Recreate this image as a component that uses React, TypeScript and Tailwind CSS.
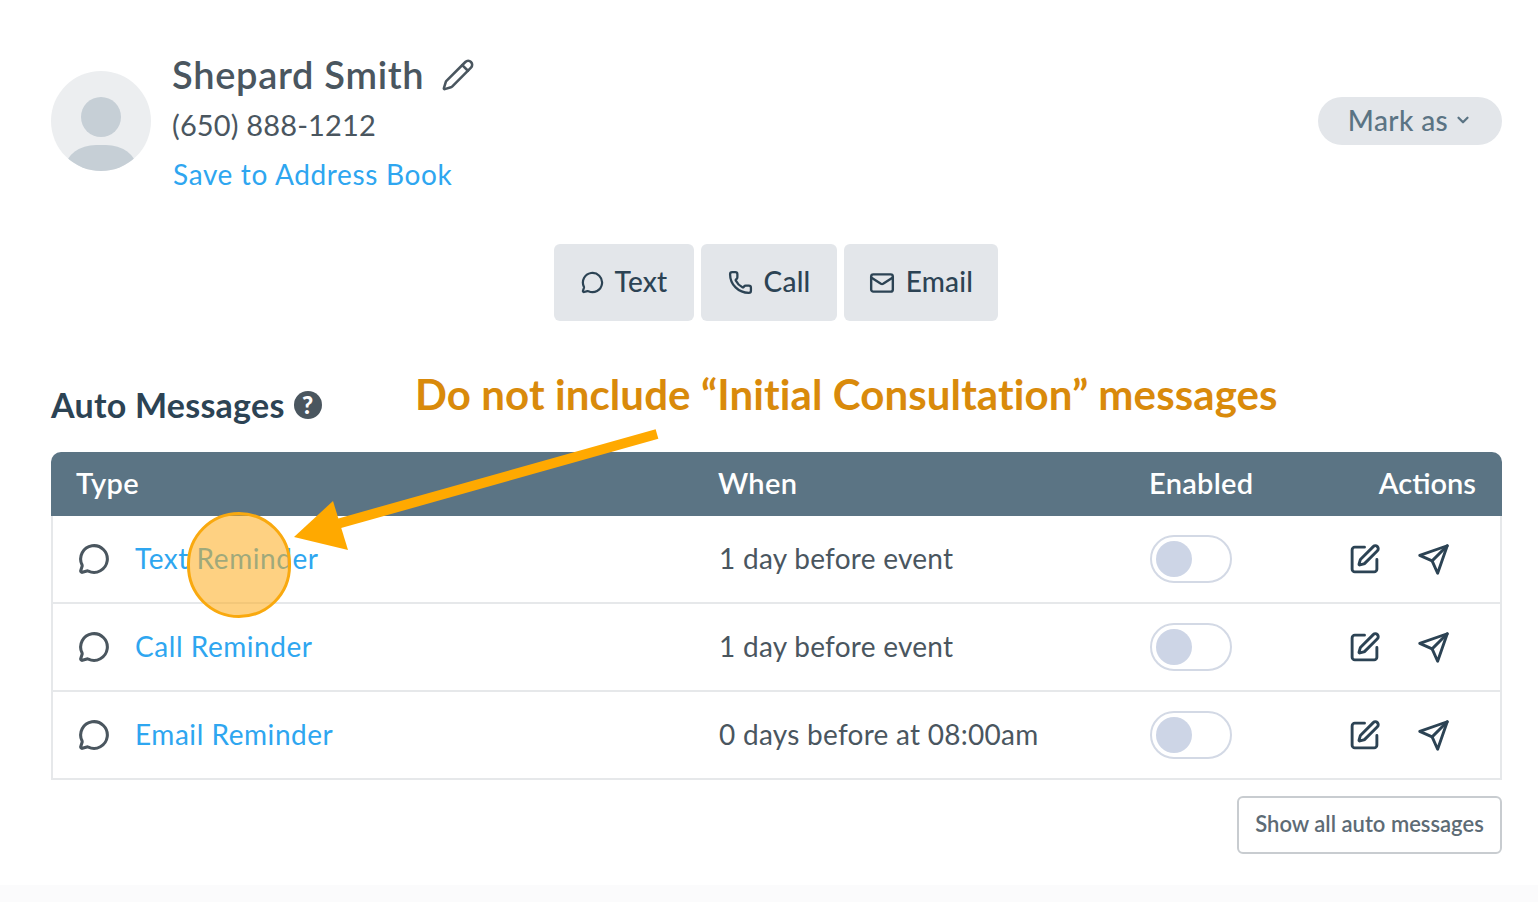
import React from 'react';
import { ChevronDown, Mail, MessageCircle, Pencil, Phone, SquarePen } from 'lucide-react';
import { FiSend } from 'react-icons/fi';

const rows = [
  { name: 'Text Reminder', when: '1 day before event' },
  { name: 'Call Reminder', when: '1 day before event' },
  { name: 'Email Reminder', when: '0 days before at 08:00am' },
];

const contactButtons = [
  { label: 'Text', icon: <MessageCircle size={23} strokeWidth={2.3} />, width: 'w-[140px]' },
  { label: 'Call', icon: <Phone size={25} strokeWidth={2.2} />, width: 'w-[136px]' },
  { label: 'Email', icon: <Mail size={26} strokeWidth={2.2} />, width: 'w-[154px]' },
];

const App = () => {
  return (
    <div className="relative h-[902px] w-[1538px] overflow-hidden bg-white font-['Lato',sans-serif] text-[#4a565f]">
      <div className="h-[885px] pl-[51px] pr-[36px] pt-[52px]">
        {/* Contact header */}
        <div className="flex items-center justify-between">
          <div className="flex items-center gap-[21px]">
            <div className="relative mb-[6px] h-[100px] w-[100px] overflow-hidden rounded-full bg-[#eceef0]">
              <div className="absolute left-[30px] top-[26px] h-[40px] w-[40px] rounded-full bg-[#c6cfd6]" />
              <div className="absolute left-[15px] top-[74px] h-[50px] w-[70px] rounded-[30px/22px] bg-[#c6cfd6]" />
            </div>
            <div className="flex flex-col">
              <div className="flex h-[44px] items-center gap-[17px]">
                <span className="text-[38px] font-semibold leading-none tracking-[0.7px]">Shepard Smith</span>
                <Pencil size={34} strokeWidth={1.8} className="mt-[2px]" />
              </div>
              <div className="flex h-[56px] items-center text-[29px] leading-none tracking-[0.15px]">(650) 888-1212</div>
              <a className="flex h-[44px] items-center pl-[1px] text-[28px] leading-none tracking-[0.65px] text-[#2ea6f0]">Save to Address Book</a>
            </div>
          </div>
          <button className="mb-[6px] flex h-[48px] w-[184px] items-center justify-center gap-[6px] rounded-full bg-[#e3e6ea] pb-[2px] text-[28px] font-medium tracking-[0.4px] text-[#5b7484]">
            Mark as
            <ChevronDown size={18} strokeWidth={3} />
          </button>
        </div>

        {/* Contact actions */}
        <div className="mt-[48px] flex justify-center gap-[7px] pr-[1px]">
          {contactButtons.map((b) => (
            <button
              key={b.label}
              className={`flex h-[77px] items-center justify-center gap-[11px] rounded-[6px] bg-[#e3e6ea] text-[28px] font-medium tracking-[0.2px] text-[#2c4354] ${b.width}`}
            >
              {b.icon}
              <span className="pb-[3px]">{b.label}</span>
            </button>
          ))}
        </div>

        {/* Auto messages */}
        <div className="mt-[62px] flex h-[44px] items-center gap-[9px]">
          <h2 className="text-[34px] font-bold leading-none tracking-[0.25px] text-[#2c4354]">Auto Messages</h2>
          <span className="flex h-[28px] w-[28px] items-center justify-center rounded-full bg-[#4a565f] text-[24px] font-black leading-none text-white">?</span>
        </div>

        <div className="mt-[25px] overflow-hidden rounded-t-[10px]">
          <div className="grid h-[64px] grid-cols-[642px_431px_1fr] items-center bg-[#5b7484] pb-[2px] pl-[25px] pr-[26px] text-[29px] font-semibold tracking-[0.3px] text-white">
            <span>Type</span>
            <span>When</span>
            <div className="flex justify-between">
              <span>Enabled</span>
              <span className="tracking-normal">Actions</span>
            </div>
          </div>
          <div className="border-x-2 border-b-2 border-[#e6e8ea]">
            {rows.map((row, i) => (
              <div
                key={row.name}
                className={`grid grid-cols-[641px_431px_1fr] items-center pl-[25px] pr-[50px] ${i < 2 ? 'h-[88px] border-b-2 border-[#e6e8ea]' : 'h-[86px]'}`}
              >
                <div className="flex items-center gap-[25px]">
                  <MessageCircle size={32} strokeWidth={2.3} />
                  <a className="pb-[2px] text-[28px] tracking-[0.55px] text-[#2ea6f0]">{row.name}</a>
                </div>
                <span className="pb-[2px] text-[28px] tracking-[0.27px]">{row.when}</span>
                <div className="flex items-center justify-between">
                  <div className="flex h-[48px] w-[82px] items-center rounded-full border-2 border-[#d3d9e5] bg-white pl-[4px]">
                    <div className="h-[36px] w-[36px] rounded-full bg-[#cdd5e6]" />
                  </div>
                  <div className="flex items-center gap-[36px] text-[#2c4354]">
                    <SquarePen size={33} strokeWidth={2.1} />
                    <FiSend size={33} strokeWidth={2.1} />
                  </div>
                </div>
              </div>
            ))}
          </div>
        </div>

        <div className="mt-[16px] flex justify-end">
          <button className="h-[58px] w-[265px] rounded-[6px] border-2 border-[#c8ccd0] bg-white pb-[3px] text-[22px] font-semibold text-[#5d6b75]">
            Show all auto messages
          </button>
        </div>
      </div>
      <div className="h-[17px] bg-[#fbfbfc]" />

      {/* Annotation overlay */}
      <p className="absolute left-[415px] top-[369px] whitespace-nowrap text-[42px] font-bold leading-[50px] tracking-[0.1px] text-[#d98a0b]">
        Do not include “Initial Consultation” messages
      </p>
      <svg className="absolute left-0 top-0" width="1538" height="902" fill="none">
        <path d="M657 434 L330 526" stroke="#ffa900" strokeWidth="10" />
        <path d="M294 537 L333 501 L348 550 Z" fill="#ffa900" />
      </svg>
      <div className="absolute left-[187px] top-[512px] h-[106px] w-[104px] rounded-full border-[3px] border-[#f9a90f] bg-[#fdac1c]/55" />
    </div>
  );
};

export default App;
